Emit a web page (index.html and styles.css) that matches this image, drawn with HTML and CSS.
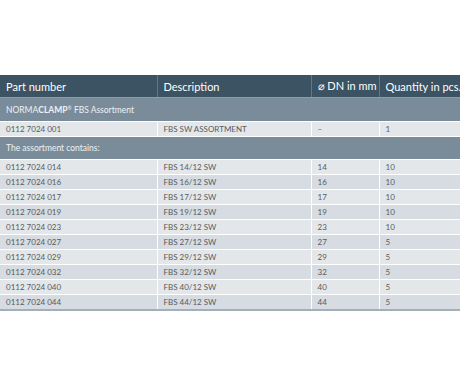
FILE: index.html
```html
<!DOCTYPE html>
<html>
<head>
<meta charset="utf-8">
<link rel="stylesheet" href="styles.css">
</head>
<body>
<table class="tbl">
  <colgroup>
    <col class="c1"><col class="c2"><col class="c3"><col class="c4">
  </colgroup>
  <thead>
    <tr class="head">
      <th>Part number</th><th>Description</th><th>⌀ DN in mm</th><th>Quantity in pcs.</th>
    </tr>
  </thead>
  <tbody>
    <tr class="section first"><td colspan="4">NORMA<b>CLAMP</b><sup>®</sup> FBS Assortment</td></tr>
    <tr class="row a"><td>0112 7024 001</td><td>FBS SW ASSORTMENT</td><td>–</td><td>1</td></tr>
    <tr class="section"><td colspan="4">The assortment contains:</td></tr>
    <tr class="row a"><td>0112 7024 014</td><td>FBS 14/12 SW</td><td>14</td><td>10</td></tr>
    <tr class="row b"><td>0112 7024 016</td><td>FBS 16/12 SW</td><td>16</td><td>10</td></tr>
    <tr class="row a"><td>0112 7024 017</td><td>FBS 17/12 SW</td><td>17</td><td>10</td></tr>
    <tr class="row b"><td>0112 7024 019</td><td>FBS 19/12 SW</td><td>19</td><td>10</td></tr>
    <tr class="row a"><td>0112 7024 023</td><td>FBS 23/12 SW</td><td>23</td><td>10</td></tr>
    <tr class="row b"><td>0112 7024 027</td><td>FBS 27/12 SW</td><td>27</td><td>5</td></tr>
    <tr class="row a"><td>0112 7024 029</td><td>FBS 29/12 SW</td><td>29</td><td>5</td></tr>
    <tr class="row b"><td>0112 7024 032</td><td>FBS 32/12 SW</td><td>32</td><td>5</td></tr>
    <tr class="row a"><td>0112 7024 040</td><td>FBS 40/12 SW</td><td>40</td><td>5</td></tr>
    <tr class="row b last"><td>0112 7024 044</td><td>FBS 44/12 SW</td><td>44</td><td>5</td></tr>
  </tbody>
</table>
</body>
</html>
```
FILE: styles.css
```css
html, body {
  margin: 0;
  padding: 0;
  background: #ffffff;
}
body {
  padding-top: 75px;
  font-family: Lato, "Open Sans", sans-serif;
}
.tbl {
  width: 460px;
  border-collapse: collapse;
  table-layout: fixed;
}
.c1 { width: 157px; }
.c2 { width: 154px; }
.c3 { width: 68px; }
.c4 { width: 81px; }

.head th {
  background: #3c5364;
  color: #ffffff;
  font-weight: 400;
  font-size: 11px;
  text-align: left;
  height: 22px;
  padding: 0 0 0 6px;
  border-left: 1px solid #61778a;
  border-bottom: 1px solid #8c9ca8;
  white-space: nowrap;
  overflow: hidden;
}
.head th:first-child { border-left: none; }

.section td {
  background: #7a8c9a;
  color: #eef1f3;
  font-size: 8.5px;
  font-weight: 400;
  height: 22px;
  padding: 0 0 0 6px;
  border-bottom: 1px solid #ffffff;
}
.section.first td { height: 23px; }
.section b { font-weight: 700; }
.section sup { font-size: 5px; vertical-align: 3px; }

.row td {
  font-size: 8px;
  color: #575b5f;
  height: 14px;
  padding: 0 0 0 6px;
  border-bottom: 1px solid #ffffff;
  border-left: 1px solid #ffffff;
  white-space: nowrap;
}
.row td:first-child { border-left: none; }
.row.a td { background: #e4e7e9; }
.row.b td { background: #d6dce1; }
.row.last td { border-bottom: 2px solid #a3b0ba; }
```
